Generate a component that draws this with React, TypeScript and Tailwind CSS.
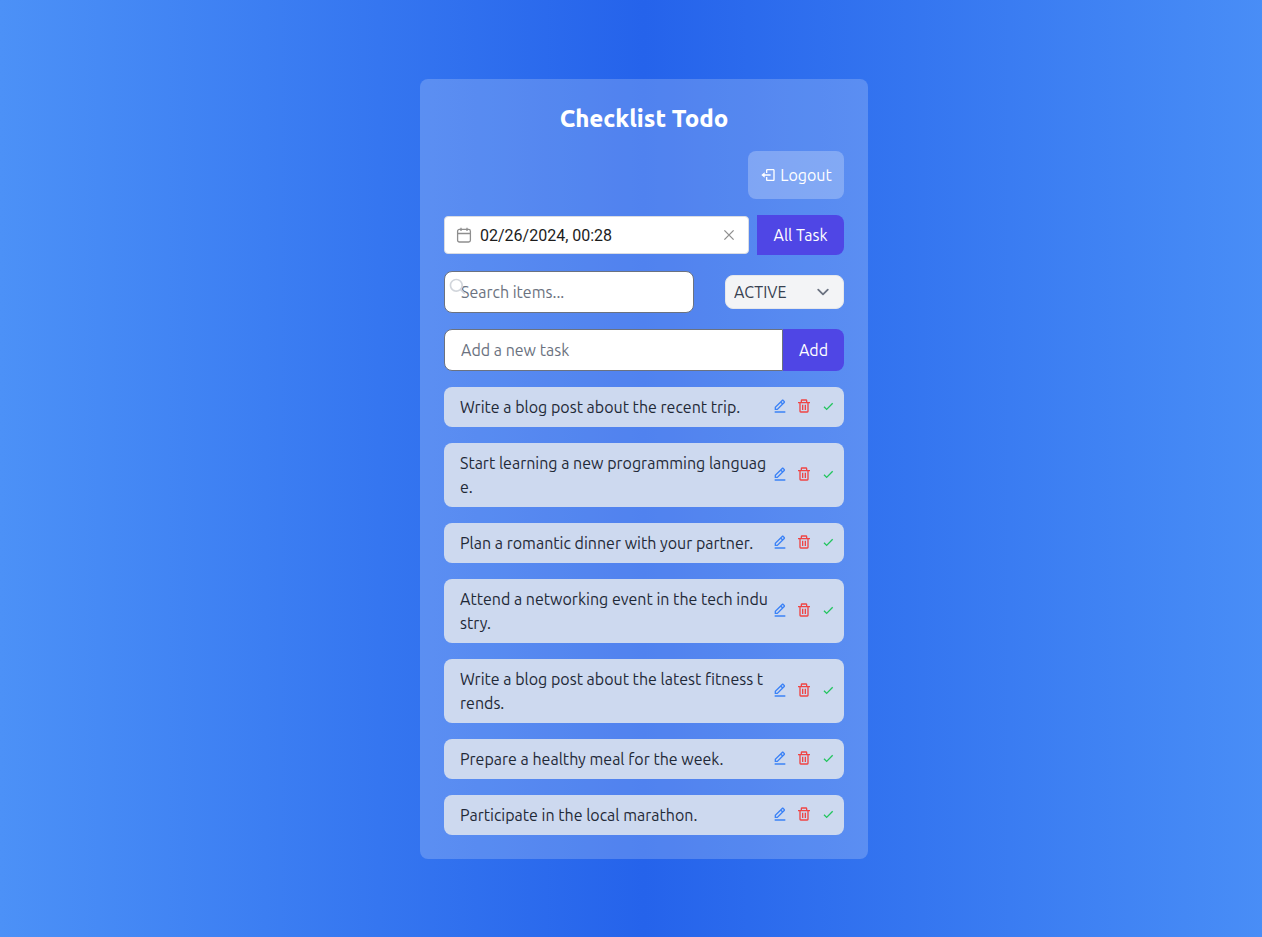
import { BiCheck, BiEditAlt, BiLogOut, BiSearch, BiTrash } from 'react-icons/bi'

const tasks = [
  'Write a blog post about the recent trip.',
  'Start learning a new programming language.',
  'Plan a romantic dinner with your partner.',
  'Attend a networking event in the tech industry.',
  'Write a blog post about the latest fitness t\nrends.',
  'Prepare a healthy meal for the week.',
  'Participate in the local marathon.',
]

function CalendarIcon() {
  return (
    <svg width="16" height="16" viewBox="0 0 16 16" fill="none" stroke="#8e8e8e" strokeWidth="1.3" className="shrink-0">
      <rect x="1.6" y="2.4" width="12.8" height="12.6" rx="1.8" />
      <path d="M1.6 6.5h12.8M5 0.8v3.2M11 0.8v3.2" />
    </svg>
  )
}

function DateField() {
  return (
    <div className="flex h-[38px] min-w-0 flex-1 items-center gap-2 rounded border border-[#d9dce3] bg-white px-[11px]">
      <CalendarIcon />
      <input
        aria-label="Date"
        defaultValue="02/26/2024, 00:28"
        className="min-w-0 flex-1 bg-transparent pt-0.5 font-[Roboto,sans-serif] text-base text-[#1c1c1c] outline-none"
      />
      <button type="button" aria-label="Clear date" className="shrink-0">
        <svg width="16" height="16" viewBox="0 0 16 16" fill="none" stroke="#8e8e8e" strokeWidth="1.3">
          <path d="M3.4 3.4l9.2 9.2M12.6 3.4l-9.2 9.2" />
        </svg>
      </button>
    </div>
  )
}

function StatusSelect() {
  return (
    <div className="relative w-[119px]">
      <select
        aria-label="Status"
        className="h-[34px] w-full appearance-none rounded-lg border border-[#e5e7eb] bg-[#f3f4f6] px-2 text-base text-[#374151] outline-none"
      >
        <option>ACTIVE</option>
        <option>COMPLETED</option>
      </select>
      <svg
        viewBox="0 0 20 20"
        fill="none"
        stroke="#6b7280"
        strokeWidth="1.5"
        strokeLinecap="round"
        strokeLinejoin="round"
        className="pointer-events-none absolute inset-y-0 right-[9px] my-auto size-6"
      >
        <path d="m6 8 4 4 4-4" />
      </svg>
    </div>
  )
}

function TaskItem({ text }: { text: string }) {
  return (
    <li className="flex items-center justify-between rounded-lg bg-[#cdd9ef] py-2 pr-2 pl-4">
      <span className="min-w-0 flex-1 break-all whitespace-pre-line text-[#1f2937]">{text}</span>
      <span className="flex shrink-0 gap-2 pb-0.5">
        <button type="button" aria-label="Edit" className="text-[#3b82f6]">
          <BiEditAlt size={16} />
        </button>
        <button type="button" aria-label="Delete" className="text-[#ef4444]">
          <BiTrash size={16} />
        </button>
        <button type="button" aria-label="Complete" className="text-[#22c55e]">
          <BiCheck size={16} />
        </button>
      </span>
    </li>
  )
}

export default function App() {
  return (
    <div className="overflow-hidden">
      <main className="-mr-[26px] flex min-h-screen items-center justify-center bg-linear-to-r/srgb from-[#4c91f7] via-[#2563eb] to-[#4a8ff7] font-[Ubuntu,'Noto_Sans',sans-serif] text-base">
        <section className="flex w-full max-w-md flex-col gap-4 rounded-lg bg-white/20 p-6">
          <h1 className="text-center text-2xl font-extrabold text-white">Checklist Todo</h1>
          <button
            type="button"
            className="flex h-12 w-24 items-center justify-center gap-1 self-end rounded-lg bg-white/25 text-white"
          >
            <BiLogOut size={16} />
            Logout
          </button>
          <div className="flex items-center gap-2">
            <DateField />
            <button type="button" className="h-10 w-[87px] rounded-r-lg bg-[#4f46e5] text-white">
              All Task
            </button>
          </div>
          <div className="flex items-center justify-between">
            <div className="relative w-[250px]">
              <input
                aria-label="Search items"
                placeholder="Search items..."
                className="h-[42px] w-full rounded-lg border border-[#6b7280] bg-white px-4 placeholder:text-[#6b7280]"
              />
              <BiSearch size={20} className="pointer-events-none absolute top-1.5 left-1 text-[#d1d5db]" />
            </div>
            <StatusSelect />
          </div>
          <form className="flex">
            <input
              aria-label="New task"
              placeholder="Add a new task"
              className="h-[42px] min-w-0 flex-1 rounded-l-lg border border-[#6b7280] bg-white px-4 placeholder:text-[#6b7280]"
            />
            <button type="button" className="rounded-r-lg bg-[#4f46e5] px-4 text-white">
              Add
            </button>
          </form>
          <ul className="flex flex-col gap-4">
            {tasks.map((t) => (
              <TaskItem key={t} text={t} />
            ))}
          </ul>
        </section>
      </main>
    </div>
  )
}
